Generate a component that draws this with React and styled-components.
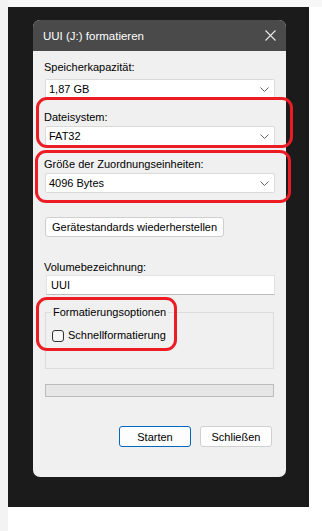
import React from 'react';
import styled, { createGlobalStyle } from 'styled-components';

const GlobalStyle = createGlobalStyle`
	html, body {
		margin: 0;
		padding: 0;
		background: #ffffff;
	}
	body {
		font-family: 'Liberation Sans', Arial, sans-serif;
		font-size: 11px;
		color: #000;
	}
`;

const Page = styled.div`
	display: flex;
	width: 322px;
	height: 531px;
	overflow: hidden;

	.Strip {
		width: 8px;
		background: #f3f3f3;
	}
`;

const Main = styled.div`
	display: flex;
	flex-flow: column;
	flex: 1;

	.TopBand {
		height: 7px;
		background: #f7f7f7;
	}
`;

const Stage = styled.div`
	position: relative;
	width: 301px;
	height: 500px;
	background: #1b1b1b;
	padding: 13px 0 0 25px;
	box-sizing: border-box;
`;

const Dialog = styled.div`
	width: 253px;
	height: 457px;
	border-radius: 7px;
	overflow: hidden;
	background: #f0f0f0;
	display: flex;
	flex-flow: column;
`;

const TitleBar = styled.div`
	height: 31px;
	flex-shrink: 0;
	background: #4a4a4a;
	color: #fff;
	display: flex;
	align-items: center;
	justify-content: space-between;
	padding: 0 10px 0 10px;
	font-size: 11.5px;

	svg {
		display: block;
	}
`;

const Body = styled.div`
	display: flex;
	flex-flow: column;
	align-items: flex-start;
	padding: 9px 11px 0 12px;
`;

const Label = styled.div`
	line-height: 15px;
	margin-top: ${p => p.$top || 0}px;
	margin-bottom: ${p => p.$bottom || 0}px;
	margin-left: -1px;
`;

const Combo = styled.div`
	box-sizing: border-box;
	width: 230px;
	height: 20px;
	background: #fff;
	border: 1px solid #dadada;
	border-radius: 2px;
	display: flex;
	align-items: center;
	justify-content: space-between;
	padding: 0 5px 0 3px;

	svg {
		display: block;
	}
`;

const Button = styled.div`
	box-sizing: border-box;
	height: ${p => p.$h || 20}px;
	width: ${p => (p.$w ? p.$w + 'px' : 'auto')};
	padding: 0 6px;
	margin-top: ${p => p.$top || 0}px;
	background: #fdfdfd;
	border: 1px solid ${p => (p.$primary ? '#0067c0' : '#cfcfcf')};
	border-radius: 3px;
	display: flex;
	align-items: center;
	justify-content: center;
`;

const TextInput = styled.div`
	box-sizing: border-box;
	width: 229px;
	height: 20px;
	margin-left: 1px;
	background: #fff;
	border: 1px solid #e2e2e2;
	border-bottom-color: #bdbdbd;
	display: flex;
	align-items: center;
	padding-left: 4px;
`;

const Group = styled.div`
	position: relative;
	box-sizing: border-box;
	width: 229px;
	height: 57px;
	margin-top: 17px;
	border: 1px solid #dcdcdc;
	padding: 15px 0 0 6px;

	.Legend {
		position: absolute;
		top: -8px;
		left: 5px;
		padding: 0 2px;
		background: #f0f0f0;
		line-height: 15px;
	}
`;

const CheckRow = styled.div`
	display: flex;
	align-items: center;
	gap: 4px;
	line-height: 15px;
`;

const CheckBox = styled.div`
	box-sizing: border-box;
	width: 12px;
	height: 12px;
	border: 1px solid #333;
	border-radius: 3px;
	background: #f7f7f7;
`;

const Progress = styled.div`
	box-sizing: border-box;
	width: 229px;
	height: 13px;
	margin-top: 15px;
	background: #e6e6e6;
	border: 1px solid #bcbcbc;
`;

const ButtonRow = styled.div`
	display: flex;
	gap: 9px;
	align-self: flex-end;
	margin-top: 29px;
	margin-right: 3px;
`;

const Marker = styled.div`
	position: absolute;
	box-sizing: border-box;
	left: ${p => p.$x}px;
	top: ${p => p.$y}px;
	width: ${p => p.$w}px;
	height: ${p => p.$h}px;
	border: 3px solid #ec1c24;
	border-radius: 11px;
	pointer-events: none;
`;

const Chevron = () => (
	<svg width="9" height="5" viewBox="0 0 9 5">
		<path d="M0.5 0.5 L4.5 4.5 L8.5 0.5" fill="none" stroke="#606060" strokeWidth="1" />
	</svg>
);

const CloseIcon = () => (
	<svg width="11" height="11" viewBox="0 0 11 11">
		<path d="M0.5 0.5 L10.5 10.5 M10.5 0.5 L0.5 10.5" stroke="#e8e8e8" strokeWidth="1.1" />
	</svg>
);

const App = () => (
	<>
		<GlobalStyle />
		<Page>
			<div className="Strip" />
			<Main>
				<div className="TopBand" />
				<Stage>
					<Dialog>
						<TitleBar>
							<span>UUI (J:) formatieren</span>
							<CloseIcon />
						</TitleBar>
						<Body>
							<Label $bottom={4}>Speicherkapazität:</Label>
							<Combo>
								<span>1,87 GB</span>
								<Chevron />
							</Combo>
							<Label $top={11} $bottom={1}>Dateisystem:</Label>
							<Combo>
								<span>FAT32</span>
								<Chevron />
							</Combo>
							<Label $top={11} $bottom={1}>Größe der Zuordnungseinheiten:</Label>
							<Combo>
								<span>4096 Bytes</span>
								<Chevron />
							</Combo>
							<Button $top={24}>Gerätestandards wiederherstellen</Button>
							<Label $top={23}>Volumebezeichnung:</Label>
							<TextInput>UUI</TextInput>
							<Group>
								<span className="Legend">Formatierungsoptionen</span>
								<CheckRow>
									<CheckBox />
									<span>Schnellformatierung</span>
								</CheckRow>
							</Group>
							<Progress />
							<ButtonRow>
								<Button $primary $w={72} $h={21}>Starten</Button>
								<Button $w={72} $h={21}>Schließen</Button>
							</ButtonRow>
						</Body>
					</Dialog>
					<Marker $x={28} $y={90} $w={257} $h={51} />
					<Marker $x={27} $y={143} $w={256} $h={53} />
					<Marker $x={28} $y={290} $w={141} $h={54} />
				</Stage>
				<div />
			</Main>
		</Page>
	</>
);

export default App;
